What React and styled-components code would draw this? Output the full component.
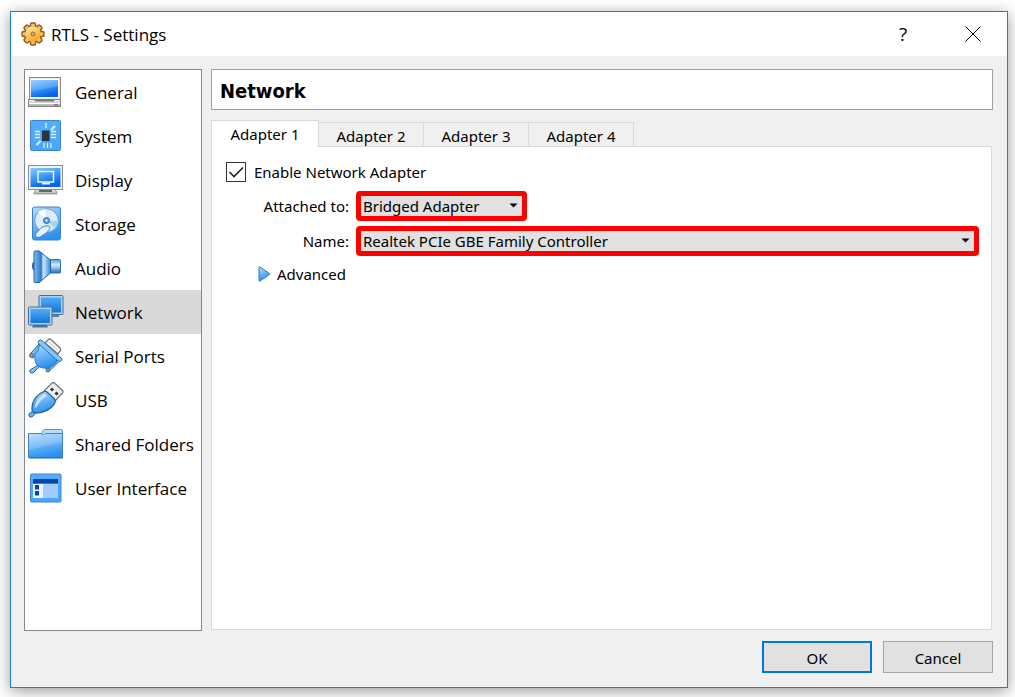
import React, { useState } from "react";
import styled, { createGlobalStyle, css } from "styled-components";

const GlobalStyle = createGlobalStyle`
  * {
    box-sizing: border-box;
  }
  body {
    margin: 0;
    background-color: #fff;
    color: #000;
    font-family: "Noto Sans", "Open Sans", sans-serif;
    font-size: 15px;
  }
`;

const Page = styled.div`
  min-height: 100vh;
  padding: 11px 7px 9px 10px;
  display: flex;
`;

const Window = styled.div`
  flex: 1;
  display: flex;
  flex-direction: column;
  border: 1px solid #1a80d0;
  background-color: #f0f0f0;
  box-shadow: 0 3px 14px rgba(0, 0, 0, 0.4);
`;

const TitleBar = styled.header`
  height: 44px;
  display: flex;
  align-items: center;
  background-color: #fff;
  padding: 0 10px;
`;

const WindowTitle = styled.h1`
  flex: 1;
  margin: 0 0 0 6px;
  font-family: "Open Sans", "Noto Sans", sans-serif;
  font-size: 17px;
  font-weight: 400;
`;

const TitleButton = styled.button`
  width: 48px;
  height: 40px;
  margin-left: 22px;
  padding: 0;
  border: none;
  background: none;
  font-family: "Open Sans", "Noto Sans", sans-serif;
  font-size: 19px;
  display: flex;
  align-items: center;
  justify-content: center;
`;

const Body = styled.div`
  flex: 1;
  display: flex;
  gap: 9px;
  padding: 13px 14px 0 13px;
`;

const Sidebar = styled.nav`
  width: 178px;
  border: 1px solid #828790;
  background-color: #fff;
`;

const SidebarItem = styled.button`
  width: 100%;
  height: 44px;
  display: flex;
  align-items: center;
  gap: 11px;
  padding: 0 0 0 3px;
  border: none;
  background-color: ${(props) => (props.$active ? "#d9d9d9" : "transparent")};
  color: #000;
  font-family: "Open Sans", "Noto Sans", sans-serif;
  font-size: 17px;
  text-align: left;
  white-space: nowrap;
  svg {
    flex: none;
  }
`;

const Main = styled.main`
  flex: 1;
  display: flex;
  flex-direction: column;
`;

const Heading = styled.h2`
  height: 41px;
  margin: 0 0 10px;
  padding: 1px 8px 0;
  border: 1px solid #a0a0a0;
  background-color: #fff;
  font-family: "DejaVu Sans Condensed", "DejaVu Sans", sans-serif;
  font-size: 20px;
  line-height: 41px;
`;

const Tabs = styled.div`
  display: flex;
  align-items: flex-end;
`;

const Tab = styled.button`
  width: 105px;
  height: 24px;
  padding: 2px 0 0;
  border: 1px solid #d9d9d9;
  border-width: 1px 1px 0 0;
  background-color: #f0f0f0;
  color: #000;
  font-family: inherit;
  font-size: 15px;
  line-height: 22px;
  ${(props) =>
    props.$active &&
    css`
      position: relative;
      width: 108px;
      height: 27px;
      padding: 0 0 1px;
      border-left-width: 1px;
      margin-bottom: -1px;
      background-color: #fff;
    `}
`;

const Panel = styled.section`
  flex: 1;
  margin-right: 1px;
  margin-bottom: 1px;
  padding: 15px 12px 0 14px;
  border: 1px solid #d9d9d9;
  background-color: #fff;
`;

const CheckRow = styled.label`
  display: flex;
  align-items: center;
  gap: 8px;
  width: fit-content;
  height: 20px;
  position: relative;
  svg {
    position: absolute;
    left: 0;
    top: 0;
    visibility: hidden;
    pointer-events: none;
  }
  input:checked + svg {
    visibility: visible;
  }
`;

const Checkbox = styled.input`
  appearance: none;
  width: 20px;
  height: 20px;
  margin: 0;
  border: 1px solid #333;
  background-color: #fff;
`;

const Fields = styled.div`
  display: grid;
  grid-template-columns: 123px 1fr;
  column-gap: 7px;
  row-gap: 5px;
  margin-top: 9px;
  align-items: center;
`;

const FieldLabel = styled.label`
  text-align: right;
`;

const SelectBox = styled.div`
  position: relative;
  width: ${(props) => props.$width || "100%"};
  svg {
    position: absolute;
    right: 9px;
    top: 12px;
    pointer-events: none;
  }
`;

const Select = styled.select`
  appearance: none;
  display: block;
  width: 100%;
  height: 30px;
  padding: 0 20px 0 2px;
  border: 5px solid #f00;
  border-radius: 4px;
  background-color: #e1e1e1;
  color: #000;
  font-family: inherit;
  font-size: 15px;
`;

const Advanced = styled.button`
  display: flex;
  align-items: center;
  gap: 6px;
  margin: 6px 0 0 31px;
  padding: 0;
  border: none;
  background: none;
  color: #000;
  font-family: inherit;
  font-size: 15px;
  line-height: 24px;
`;

const Footer = styled.footer`
  display: flex;
  justify-content: flex-end;
  gap: 11px;
  padding: 10px 14px 14px;
`;

const Button = styled.button`
  width: 110px;
  height: 32px;
  padding: 2px 0 0;
  border: ${(props) => (props.$primary ? "2px solid #0078d7" : "1px solid #a0a6aa")};
  background-color: #e1e1e1;
  color: #000;
  font-family: inherit;
  font-size: 15px;
`;

const GradientSheet = styled.svg`
  position: absolute;
`;

const Gradients = () => (
  <GradientSheet width="0" height="0" aria-hidden="true">
    <defs>
      <linearGradient id="screen" x1="0" y1="0" x2="0.4" y2="1">
        <stop offset="0" stopColor="#8cc8ff" />
        <stop offset="0.5" stopColor="#3f9bf8" />
        <stop offset="1" stopColor="#0763e8" />
      </linearGradient>
      <linearGradient id="sky" x1="0" y1="0" x2="0.3" y2="1">
        <stop offset="0" stopColor="#b4dcff" />
        <stop offset="1" stopColor="#2b92f2" />
      </linearGradient>
      <linearGradient id="tile" x1="0" y1="0" x2="0" y2="1">
        <stop offset="0" stopColor="#55acfd" />
        <stop offset="1" stopColor="#4aa5ff" />
      </linearGradient>
      <linearGradient id="monitor" x1="0" y1="0" x2="0" y2="1">
        <stop offset="0" stopColor="#52abf8" />
        <stop offset="1" stopColor="#1573dc" />
      </linearGradient>
      <linearGradient id="cone" x1="0" y1="0" x2="1" y2="0">
        <stop offset="0" stopColor="#7fbcf2" />
        <stop offset="0.35" stopColor="#3b86d2" />
        <stop offset="0.6" stopColor="#c4e5ff" />
        <stop offset="1" stopColor="#3089dc" />
      </linearGradient>
      <linearGradient id="tube" x1="0" y1="0" x2="0" y2="1">
        <stop offset="0" stopColor="#4c9ee8" />
        <stop offset="0.4" stopColor="#d4edff" />
        <stop offset="1" stopColor="#1b6fc6" />
      </linearGradient>
      <linearGradient id="grey" x1="0" y1="0" x2="0" y2="1">
        <stop offset="0" stopColor="#f6f6f6" />
        <stop offset="1" stopColor="#a9a9a9" />
      </linearGradient>
      <linearGradient id="gold" gradientUnits="userSpaceOnUse" x1="5" y1="3" x2="15" y2="22">
        <stop offset="0" stopColor="#fff3cc" />
        <stop offset="0.5" stopColor="#f9c65c" />
        <stop offset="1" stopColor="#ef950c" />
      </linearGradient>
    </defs>
  </GradientSheet>
);

const Icon = ({ children }) => (
  <svg width="36" height="36" viewBox="0 0 36 36" aria-hidden="true">
    {children}
  </svg>
);

const GeneralIcon = () => (
  <Icon>
    <rect x="1.5" y="3.5" width="31" height="22" fill="#e8e8e4" stroke="#8c8c8c" />
    <rect x="3" y="5" width="28" height="18.5" fill="#fff" />
    <rect x="3" y="6" width="27" height="17" fill="url(#screen)" />
    <path d="M3 6h27v6Q15 16 3 17z" fill="#fff" opacity="0.16" />
    <rect x="0.5" y="25.5" width="32" height="7" fill="url(#grey)" stroke="#858585" />
    <path d="M6 25.5h21l-1.5 2h-18z" fill="#777" />
    <path d="M1 29.5h31" stroke="#fff" />
    <path d="M26 31h4" stroke="#555" />
  </Icon>
);

const SystemIcon = () => (
  <Icon>
    <rect x="2.5" y="2.5" width="30" height="30" rx="1" fill="url(#tile)" stroke="#3d82c4" />
    <rect x="14.5" y="13" width="6.5" height="9.5" fill="#333" stroke="#1e3448" />
    <path
      d="M7 13.5h5M7 16.5h5M7 19.5h5M23 13.5h5M23 16.5h5M23 19.5h5M18 5v5M16 25v5M19.5 25v5M23 25v5"
      stroke="#e4f2ff"
      strokeWidth="1.3"
    />
    <path d="M23 12l4-4M8.5 27l4-4" stroke="#e4f2ff" strokeWidth="2.2" />
  </Icon>
);

const DisplayIcon = () => (
  <Icon>
    <path d="M9 27h17l3 3v2H6v-2z" fill="url(#grey)" stroke="#8c8c8c" strokeWidth="0.8" />
    <path d="M11 28h13v2H11z" fill="#666" />
    <rect x="0.5" y="3.5" width="34" height="24" fill="#f2f2ee" stroke="#8c8c8c" />
    <rect x="2.5" y="6" width="30" height="19" fill="url(#screen)" />
    <rect x="10" y="9.5" width="15.5" height="10.5" fill="none" stroke="#e8f4ff" strokeWidth="1.5" />
    <path d="M14 21.5h8" stroke="#e8f4ff" strokeWidth="2" />
  </Icon>
);

const StorageIcon = () => (
  <Icon>
    <rect x="4.5" y="1" width="28" height="33" rx="2" fill="url(#sky)" stroke="#3b82c0" />
    <circle cx="18.5" cy="14.5" r="11.8" fill="#d9edfc" stroke="#6c9fc8" />
    <path d="M18.5 14.5L10 6a12 12 0 0 1 7-3z" fill="#fff" />
    <path d="M18.5 14.5L27 23a12 12 0 0 0 3-8z" fill="#a9d3f5" />
    <circle cx="18.5" cy="14.5" r="3" fill="#4fa5ea" stroke="#2a6fae" />
    <circle cx="18.5" cy="14.5" r="1" fill="#fff" />
    <path
      d="M21.5 20.5c2 1.5-3 7-8 9.5c-2 2-5.5 2-6-.5s3-4 4-6c2-3 8-4.500 10-3z"
      fill="#e4f3ff"
      stroke="#3f7fb8"
    />
  </Icon>
);

const AudioIcon = () => (
  <Icon>
    <path d="M6 12c-2 0-2 8 0 8z" fill="#2f79c8" stroke="#27609c" />
    <rect x="22" y="9.5" width="10.5" height="13.5" rx="1" fill="url(#tube)" stroke="#2d70b4" />
    <path
      d="M6 2q0-1 1-1h4q1 0 2 1.5L22.5 10v13L13 31q-1 1.5-2 1.5H7q-1 0-1-1z"
      fill="url(#cone)"
      stroke="#2766a8"
    />
    <path d="M13 2v29" stroke="#2361a4" />
  </Icon>
);

const NetworkIcon = () => (
  <Icon>
    <rect x="11" y="1.5" width="24" height="19" rx="1" fill="#a9d3f6" stroke="#486f90" />
    <rect x="13" y="3.5" width="20" height="15" fill="url(#monitor)" />
    <path d="M24 21h7v2h-7z" fill="#56809f" />
    <path d="M5 31h14l1 2.5H4z" fill="#477294" />
    <rect x="0.5" y="13" width="23.5" height="18" rx="1" fill="#a9d3f6" stroke="#486f90" />
    <rect x="2.5" y="15" width="19.5" height="14" fill="url(#monitor)" />
  </Icon>
);

const SerialIcon = () => (
  <Icon>
    <path d="M17 5l3.5-3.5q1-1 2.5 0L32 10q1 1 .5 2.5L30 16z" fill="#f5f5f5" stroke="#777" strokeWidth="1.3" />
    <path d="M21 4l9 8.5" stroke="#bbb" strokeDasharray="2 1" />
    <path d="M2 18l1-3 8-9 4 4-9 9-2 1zM19 30l8-10 4 3.500-8 8-2 1z" fill="#6ebcff" stroke="#2c66a0" />
    <circle cx="3.5" cy="17.500" r="2" fill="#999" stroke="#666" />
    <circle cx="20" cy="32" r="2" fill="#999" stroke="#666" />
    <path d="M10 27l-8 5q-1 2 1 3h2l7-7z" fill="#79c3fb" stroke="#2c66a0" />
    <path
      d="M13 6l16 15q0 4-3 5c-2 3-6 5-10 4c-5 0-9-4-9-9c-1-4 1-7 3-8q0-4 3-7z"
      fill="url(#sky)"
      stroke="#2d73b6"
    />
    <path d="M10.5 3q2-2.500 4 0L33 20q2 1 .5 2.500T30 23L11 6q-1.500-1.500-.5-3z" fill="#83c7ff" stroke="#2c70b0" />
  </Icon>
);

const UsbIcon = () => (
  <Icon>
    <path d="M16.5 8.5L24 1q1.5-1 3 .5l7.500 7q1 1 0 2.500l-7.500 8z" fill="#eee" stroke="#777" strokeWidth="1.3" />
    <rect x="22.5" y="6" width="3" height="3" transform="rotate(45 24 7.5)" fill="#333" />
    <rect x="27" y="10" width="3" height="3" transform="rotate(45 28.5 11.5)" fill="#333" />
    <path d="M6 28l-5 4q-1 2 1 3h2l5-5z" fill="#63b4f6" stroke="#24609c" />
    <path
      d="M4 27C4 19 9 12 16 9.5q2-.5 3.5 1l7 6.500q1.500 1.500.5 3.500C24 27 16 31 8 31q-4 0-4-4z"
      fill="url(#sky)"
      stroke="#245f9f"
      strokeWidth="1.3"
    />
    <path d="M7 24c2-6 5-10 10-12l2 2C13 17 11 21 8 26z" fill="#e3f3ff" opacity="0.8" />
  </Icon>
);

const FoldersIcon = () => (
  <Icon>
    <path d="M13 9l2-4.500Q15.500 3.500 17 3.500h16q1.500 0 1.500 1.500v9H13z" fill="#b6defc" stroke="#5898c8" />
    <path d="M0.5 7.5H13l2 1.500 3-1.500h16.500v24H0.500z" fill="url(#sky)" stroke="#3e85c0" />
    <path d="M1 8h33v9Q15 20 1 24z" fill="#fff" opacity="0.16" />
    <path d="M1 32h34" stroke="#1c67ad" />
  </Icon>
);

const InterfaceIcon = () => (
  <Icon>
    <rect x="2.5" y="4" width="30.5" height="28" rx="1" fill="url(#tile)" stroke="#3d86cc" />
    <rect x="5" y="9" width="25" height="4.5" fill="#0947a5" />
    <rect x="5" y="14" width="10" height="14" fill="#e9f4ff" />
    <rect x="15" y="14" width="15" height="14" fill="#a0ccff" />
    <path d="M7 15h4v4.5H7zM7 21h4v4.5H7z" fill="#0947a5" />
  </Icon>
);

const teeth = [0, 45, 90, 135, 180, 225, 270, 315];

const GearIcon = () => (
  <svg width="24" height="24" viewBox="0 0 24 24" aria-hidden="true">
    <g fill="#96571f">
      {teeth.map((angle) => (
        <rect key={angle} x="8.8" y="0.3" width="6.4" height="7" rx="2" transform={`rotate(${angle} 12 12)`} />
      ))}
      <circle cx="12" cy="12" r="9" />
    </g>
    <g fill="url(#gold)">
      <circle cx="12" cy="12" r="7.8" />
    </g>
    <g fill="#f8c15a">
      {teeth.map((angle) => (
        <rect key={angle} x="10.2" y="1.7" width="3.6" height="4.5" rx="1" transform={`rotate(${angle} 12 12)`} />
      ))}
    </g>
    <circle cx="12" cy="12" r="7.2" fill="url(#gold)" />
    <circle cx="12" cy="12" r="2" fill="#c9a882" stroke="#a8682a" />
  </svg>
);

const DropArrow = () => (
  <svg width="9" height="5" viewBox="0 0 9 5" aria-hidden="true">
    <path d="M0.5 0.5h8L4.5 4.5z" fill="#000" />
  </svg>
);

const pages = [
  { name: "General", icon: GeneralIcon },
  { name: "System", icon: SystemIcon },
  { name: "Display", icon: DisplayIcon },
  { name: "Storage", icon: StorageIcon },
  { name: "Audio", icon: AudioIcon },
  { name: "Network", icon: NetworkIcon },
  { name: "Serial Ports", icon: SerialIcon },
  { name: "USB", icon: UsbIcon },
  { name: "Shared Folders", icon: FoldersIcon },
  { name: "User Interface", icon: InterfaceIcon },
];

const adapters = ["Adapter 1", "Adapter 2", "Adapter 3", "Adapter 4"];

const App = () => {
  const [page, setPage] = useState("Network");
  const [adapter, setAdapter] = useState("Adapter 1");
  const [enabled, setEnabled] = useState(true);

  return (
    <>
      <GlobalStyle />
      <Gradients />
      <Page>
        <Window>
          <TitleBar>
            <GearIcon />
            <WindowTitle>RTLS - Settings</WindowTitle>
            <TitleButton aria-label="Help">?</TitleButton>
            <TitleButton aria-label="Close">
              <svg width="16" height="16" viewBox="0 0 16 16">
                <path d="M0.5 0.5l15 15M15.5 0.5l-15 15" stroke="#000" />
              </svg>
            </TitleButton>
          </TitleBar>
          <Body>
            <Sidebar>
              {pages.map(({ name, icon: PageIcon }) => (
                <SidebarItem key={name} $active={name === page} onClick={() => setPage(name)}>
                  <PageIcon />
                  {name}
                </SidebarItem>
              ))}
            </Sidebar>
            <Main>
              <Heading>{page}</Heading>
              <Tabs role="tablist">
                {adapters.map((name) => (
                  <Tab
                    key={name}
                    role="tab"
                    aria-selected={name === adapter}
                    $active={name === adapter}
                    onClick={() => setAdapter(name)}
                  >
                    {name}
                  </Tab>
                ))}
              </Tabs>
              <Panel>
                <CheckRow>
                  <Checkbox type="checkbox" checked={enabled} onChange={(e) => setEnabled(e.target.checked)} />
                  <svg width="20" height="20" viewBox="0 0 20 20" aria-hidden="true">
                    <path d="M3.5 10l4.500 4.500 9-9" fill="none" stroke="#222" strokeWidth="1.6" />
                  </svg>
                  Enable Network Adapter
                </CheckRow>
                <Fields>
                  <FieldLabel htmlFor="attached">Attached to:</FieldLabel>
                  <SelectBox $width="171px">
                    <Select id="attached">
                      <option>Bridged Adapter</option>
                    </Select>
                    <DropArrow />
                  </SelectBox>
                  <FieldLabel htmlFor="name">Name:</FieldLabel>
                  <SelectBox>
                    <Select id="name">
                      <option>Realtek PCIe GBE Family Controller</option>
                    </Select>
                    <DropArrow />
                  </SelectBox>
                </Fields>
                <Advanced>
                  <svg width="14" height="16" viewBox="0 0 14 16" aria-hidden="true">
                    <path d="M2 1.5q0-1 1-.5l9.500 6.500q.5.5 0 1L3 15q-1 .5-1-.5z" fill="url(#sky)" stroke="#2c79bd" />
                  </svg>
                  Advanced
                </Advanced>
              </Panel>
            </Main>
          </Body>
          <Footer>
            <Button $primary>OK</Button>
            <Button>Cancel</Button>
          </Footer>
        </Window>
      </Page>
    </>
  );
};

export default App;
